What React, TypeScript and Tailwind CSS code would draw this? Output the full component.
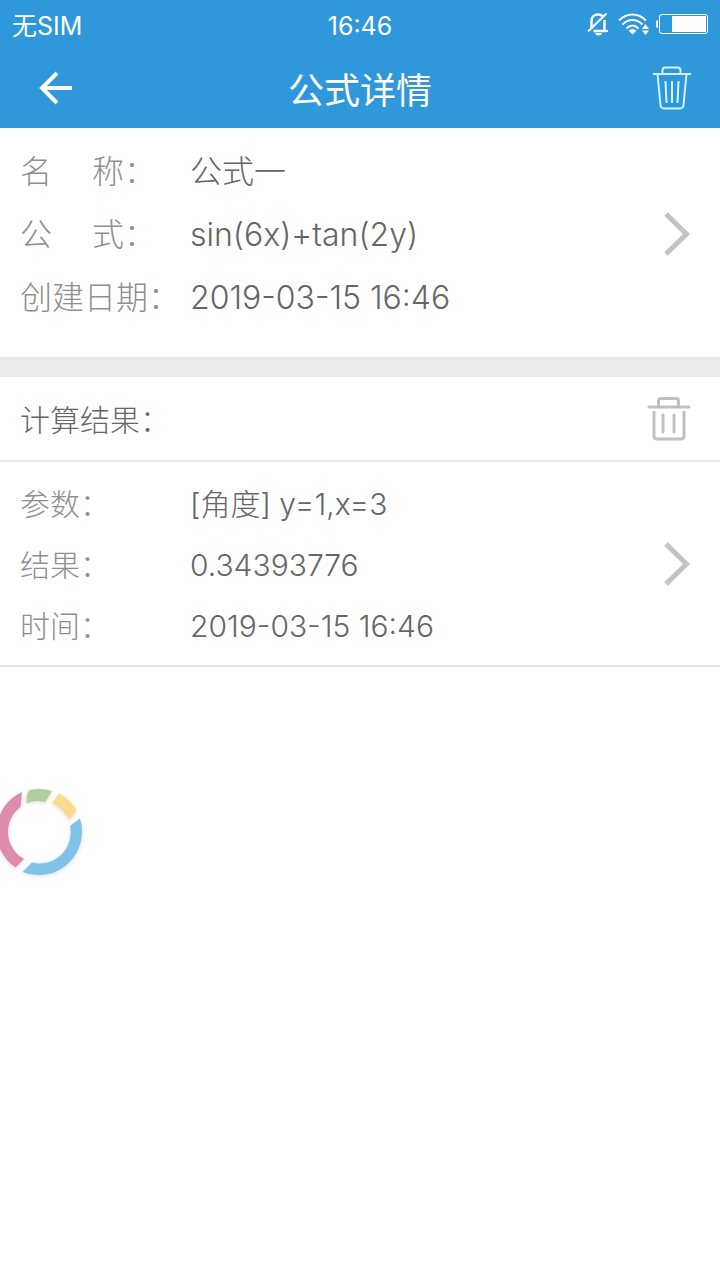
import type { ReactNode } from "react";

const formula = [
  { label: ["名", "称："], value: "公式一" },
  { label: ["公", "式："], value: "sin(6x)+tan(2y)" },
  { label: ["创建日期："], value: "2019-03-15 16:46" },
];

const result = [
  { label: "参数：", value: "[角度] y=1,x=3" },
  { label: "结果：", value: "0.34393776" },
  { label: "时间：", value: "2019-03-15 16:46" },
];

function StatusBar() {
  return (
    <div className="flex h-12 items-center justify-between px-3 pt-1 text-[25px] leading-none">
      <span className="flex-1">无SIM</span>
      <time>16:46</time>
      <div className="flex flex-1 items-center justify-end gap-1.5 pb-1">
        {/* Silent */}
        <svg className="mr-0.5" width="24" height="26" viewBox="0 0 24 26" fill="none" stroke="currentColor" strokeWidth="2.5">
          <path d="M5.500 18V10c0-4 3-6.500 6.500-6.500 2 0 3.500.6 4.700 1.700M18.500 9v11H7.500" />
          <path d="M2 20.500 20.500 2.500M9 20H22" strokeWidth="2" />
          <path d="M9 22h7c-.5 1.700-1.800 2.500-3.500 2.500S9.500 23.700 9 22z" fill="currentColor" stroke="none" />
        </svg>
        {/* Wifi */}
        <svg width="32" height="24" viewBox="0 0 32 24" fill="none" stroke="currentColor" strokeWidth="2">
          <path d="M1 8.500c8-8 19-8 27 0M4.500 12.500c6-6 14-6 20 0M8.500 16.500c4-4 8-4 12 0" />
          <path d="M14.500 22.500 10.500 18.500c2.500-2 5.500-2 8 0zM27.500 12l3.500 5h-7zM27.500 23l3.500-4.500h-7z" fill="currentColor" stroke="none" />
        </svg>
        {/* Battery */}
        <svg width="52" height="20" viewBox="0 0 52 20" fill="none">
          <rect x="3.500" y="0.500" width="48" height="19" rx="2.500" stroke="currentColor" />
          <rect x="16" y="2" width="34" height="16" fill="currentColor" />
          <path d="M2 6v8C.7 14 0 13 0 12V8c0-1 .7-2 2-2z" fill="currentColor" />
        </svg>
      </div>
    </div>
  );
}

function ChevronButton({ label }: { label: string }) {
  return (
    <button type="button" aria-label={label} className="shrink-0 text-[#c3c3c3]">
      <svg width="28" height="46" viewBox="0 0 28 46" fill="none" stroke="currentColor" strokeWidth="5">
        <path d="M2 2 22.500 22 2 42" />
      </svg>
    </button>
  );
}

function Field({ label, children, className }: { label: ReactNode; children: ReactNode; className: string }) {
  return (
    <div className={`flex items-center ${className}`}>
      <dt className="flex w-[170px] shrink-0 gap-10 whitespace-nowrap text-[#8f8f8f]">{label}</dt>
      <dd className="text-[#666666]">{children}</dd>
    </div>
  );
}

export default function App() {
  return (
    <div className="relative min-h-screen bg-white font-['Inter','Noto_Sans_CJK_SC',sans-serif] font-light">
      <header className="bg-[#2f98db] font-normal text-white">
        <StatusBar />
        <div className="flex h-20 items-center justify-between px-7">
          <button type="button" aria-label="返回" className="flex w-14 justify-center">
            <svg width="34" height="34" viewBox="0 0 34 34" fill="none" stroke="currentColor" strokeWidth="4">
              <path d="M18 2 3 17l15 15M3 17h30" />
            </svg>
          </button>
          <h1 className="pt-1.5 text-4xl">公式详情</h1>
          <button type="button" aria-label="删除公式" className="flex w-14 justify-end">
            <svg width="40" height="44" viewBox="0 0 40 44" fill="none" stroke="#d3f0ff" strokeWidth="2">
              <path d="M1 8h38M10.500 8V4.500c0-2 1-3 3-3h12c2 0 3 1 3 3V8" />
              <path d="M5.500 8 8.500 39c.2 2.500 1.500 3.500 4 3.500h15c2.500 0 3.800-1 4-3.500L34.500 8" />
              <path d="M13.500 15l1 22M20 15v22M26.500 15l-1 22" />
            </svg>
          </button>
        </div>
      </header>

      <main>
        <section className="flex items-center justify-between border-b-20 border-[#ebebeb] pt-3 pr-7 pb-7 pl-5">
          <dl className="text-[32px] leading-none">
            {formula.map((row) => (
              <Field
                key={row.value}
                className="h-[63px]"
                label={row.label.map((part) => (
                  <span key={part}>{part}</span>
                ))}
              >
                {row.value}
              </Field>
            ))}
          </dl>
          <ChevronButton label="编辑公式" />
        </section>

        <div className="flex h-[85px] items-center justify-between border-b-2 border-[#e8e8e8] pr-7 pl-5">
          <h2 className="pt-0.5 text-3xl text-[#666666]">计算结果：</h2>
          <button type="button" aria-label="清空结果" className="text-[#c0c0c0]">
            <svg width="46" height="46" viewBox="0 1 46 46" fill="none" stroke="currentColor" strokeWidth="3" strokeLinecap="round">
              <path d="M3 12h40M12.500 11V6c0-1.500.8-2.500 2.500-2.500h15c1.700 0 2.500 1 2.500 2.500v5" />
              <path d="M8 17v24c0 2 1 3 3 3h24c2 0 3-1 3-3V17M17 20v17M28 20v17" />
            </svg>
          </button>
        </div>

        <section className="flex items-center justify-between border-b-2 border-[#e8e8e8] pt-[11px] pr-7 pb-[9px] pl-5">
          <dl className="text-[30px] leading-none">
            {result.map((row) => (
              <Field key={row.label} className="h-[61px]" label={row.label}>
                {row.value}
              </Field>
            ))}
          </dl>
          <ChevronButton label="查看结果" />
        </section>
      </main>

      {/* Floating assistant ring, docked to the left edge */}
      <button type="button" aria-label="悬浮菜单" className="absolute top-[787px] -left-1.5">
        <svg width="92" height="94" viewBox="0 0 92 94" className="drop-shadow-sm">
          <path d="M32.500 16.500C32.500 10 33 5 36 3Q47 .5 58 4L51 15Q41 12.500 32.500 16.500z" fill="#b0cf9c" />
          <path d="M65 6.500Q76 12 82.500 23L75 33Q69 21 58 16z" fill="#fbdc8e" />
          <path d="M86 31.500A43.500 43.500 0 0 1 28.500 85L38 75.500A31 31 0 0 0 76 39z" fill="#7fc3e8" />
          <path d="M28 5A43.500 43.500 0 0 0 21.500 80.500L30 72A31 31 0 0 1 26.500 20z" fill="#df8bac" />
        </svg>
      </button>
    </div>
  );
}
